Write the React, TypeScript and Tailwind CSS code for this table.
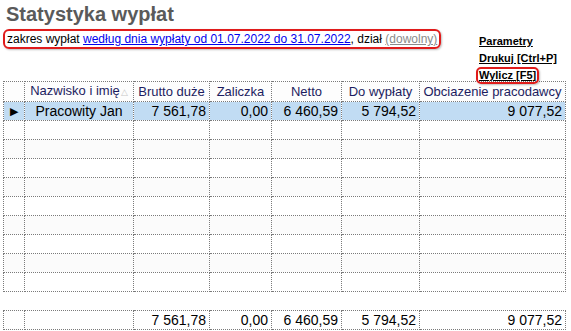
import React from 'react';

const cols = [21, 109, 76, 62, 70, 78, 146];

const headers = ['', 'Nazwisko i imię', 'Brutto duże', 'Zaliczka', 'Netto', 'Do wypłaty', 'Obciazenie pracodawcy'];

const row = ['', 'Pracowity Jan', '7 561,78', '0,00', '6 460,59', '5 794,52', '9 077,52'];
const totals = ['', '', '7 561,78', '0,00', '6 460,59', '5 794,52', '9 077,52'];

const cell = 'border border-dotted border-[#7a7a7a] h-[19px] px-[3px] leading-[17px] whitespace-nowrap overflow-hidden';

const Colgroup = () => (
  <colgroup>
    {cols.map((w, i) => (
      <col key={i} style={{ width: w }} />
    ))}
  </colgroup>
);

export default function App() {
  return (
    <div className="w-[571px] h-[331px] bg-white overflow-hidden text-black" style={{ fontFamily: '"Liberation Sans", Arial, sans-serif' }}>
      <div className="flex h-[81px]">
        <div className="pl-[3px] pt-[2px] w-[476px] shrink-0">
          <div className="pl-[3px] text-[20px] font-bold text-[#5a5a5a] leading-[24px]">Statystyka wypłat</div>
          <div className="inline-block whitespace-nowrap border-2 border-[#e01b1b] rounded-[6px] px-[2px] text-[12px] leading-[14px] py-[1px] shadow-[1px_1px_2px_rgba(0,0,0,0.25)]">
            zakres wypłat <span className="text-[#0000ee] underline">według dnia wypłaty od 01.07.2022 do 31.07.2022</span>, dział{' '}
            <span className="text-[#8a8a8a] underline">(dowolny)</span>
          </div>
        </div>
        <div className="flex flex-col pt-[33px] text-[11px] font-bold leading-[17px]">
          <span className="underline ml-[3px]">Parametry</span>
          <span className="underline ml-[3px]">Drukuj [Ctrl+P]</span>
          <span className="self-start border-2 border-[#e01b1b] rounded-[5px] px-[1px] leading-[13px] shadow-[1px_1px_2px_rgba(0,0,0,0.25)]">
            <span className="underline">Wylicz [F5]</span>
          </span>
        </div>
      </div>
      <table className="ml-[3px] border-collapse table-fixed text-[14px]" style={{ width: 562 }}>
        <Colgroup />
        <thead>
          <tr className="bg-[#fdfdfd]">
            {headers.map((h, i) => (
              <th key={i} className={`${cell} font-normal text-center text-[13px] text-[#1c1c60]`}>
                {h}
                {i === 1 && <span className="text-[#c8c8c8] text-[9px] ml-[1px]">△</span>}
              </th>
            ))}
          </tr>
        </thead>
        <tbody>
          <tr className="bg-[#c1dcf3]">
            {row.map((v, i) => (
              <td key={i} className={`${cell} ${i === 1 ? 'text-center' : 'text-right'}`}>
                {i === 0 ? <span className="text-[11px] pr-[3px]">▶</span> : v}
              </td>
            ))}
          </tr>
          {Array.from({ length: 9 }).map((_, r) => (
            <tr key={r} className={r % 2 === 0 ? 'bg-white' : 'bg-[#fbfbfb]'}>
              {cols.map((_, i) => (
                <td key={i} className={cell}></td>
              ))}
            </tr>
          ))}
        </tbody>
      </table>
      <table className="ml-[3px] mt-[18px] border-collapse table-fixed text-[14px]" style={{ width: 562 }}>
        <Colgroup />
        <tbody>
          <tr>
            {totals.map((v, i) => (
              <td key={i} className={`${cell} text-right`}>
                {v}
              </td>
            ))}
          </tr>
        </tbody>
      </table>
    </div>
  );
}
